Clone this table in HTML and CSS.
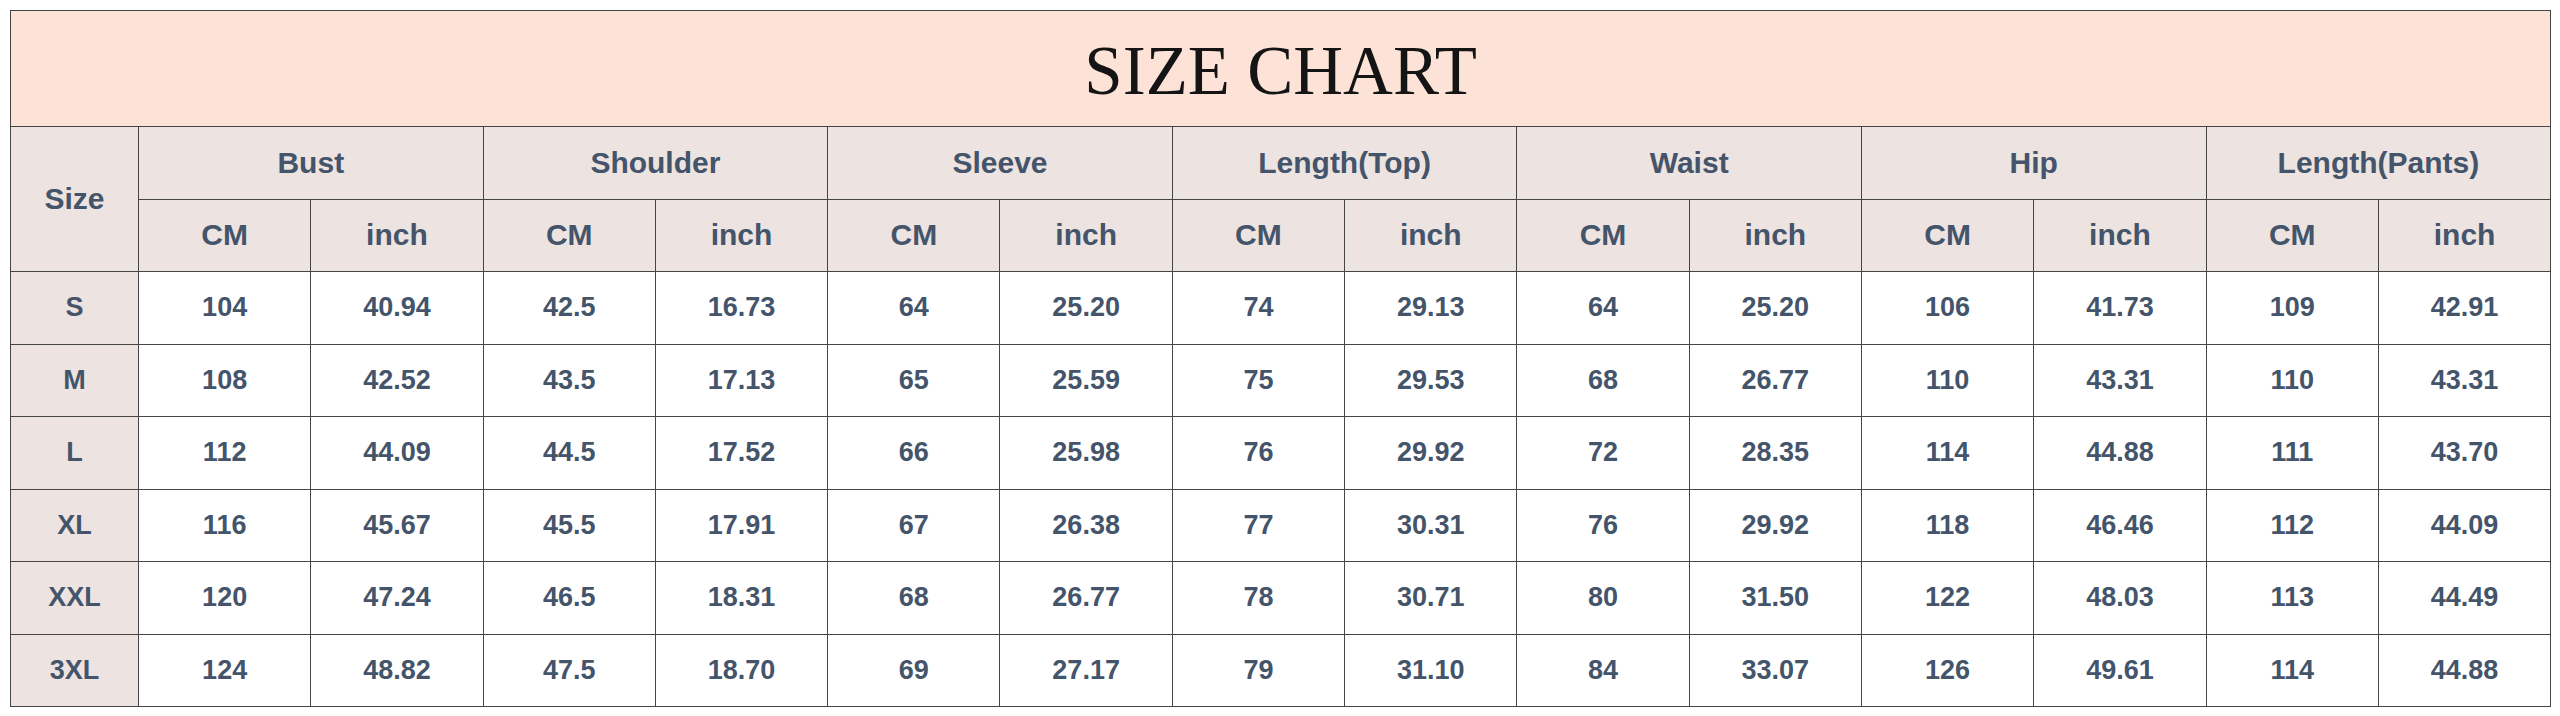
FILE: index.html
```html
<!DOCTYPE html>
<html lang="en">
<head>
<meta charset="utf-8">
<title>Size Chart</title>
<link rel="stylesheet" href="styles.css">
</head>
<body>
<div class="page">
<table class="chart">
  <colgroup>
    <col class="col-size">
    <col class="col-val"><col class="col-val">
    <col class="col-val"><col class="col-val">
    <col class="col-val"><col class="col-val">
    <col class="col-val"><col class="col-val">
    <col class="col-val"><col class="col-val">
    <col class="col-val"><col class="col-val">
    <col class="col-val"><col class="col-val">
  </colgroup>
  <thead>
    <tr class="title-row"><th colspan="15" class="title">SIZE CHART</th></tr>
    <tr class="head-row">
      <th rowspan="2" class="hd">Size</th>
      <th colspan="2" class="hd">Bust</th>
      <th colspan="2" class="hd">Shoulder</th>
      <th colspan="2" class="hd">Sleeve</th>
      <th colspan="2" class="hd">Length(Top)</th>
      <th colspan="2" class="hd">Waist</th>
      <th colspan="2" class="hd">Hip</th>
      <th colspan="2" class="hd">Length(Pants)</th>
    </tr>
    <tr class="head-row">
      <th class="hd">CM</th><th class="hd">inch</th>
      <th class="hd">CM</th><th class="hd">inch</th>
      <th class="hd">CM</th><th class="hd">inch</th>
      <th class="hd">CM</th><th class="hd">inch</th>
      <th class="hd">CM</th><th class="hd">inch</th>
      <th class="hd">CM</th><th class="hd">inch</th>
      <th class="hd">CM</th><th class="hd">inch</th>
    </tr>
  </thead>
  <tbody>
    <tr class="data-row"><th class="sz">S</th><td>104</td><td>40.94</td><td>42.5</td><td>16.73</td><td>64</td><td>25.20</td><td>74</td><td>29.13</td><td>64</td><td>25.20</td><td>106</td><td>41.73</td><td>109</td><td>42.91</td></tr>
    <tr class="data-row"><th class="sz">M</th><td>108</td><td>42.52</td><td>43.5</td><td>17.13</td><td>65</td><td>25.59</td><td>75</td><td>29.53</td><td>68</td><td>26.77</td><td>110</td><td>43.31</td><td>110</td><td>43.31</td></tr>
    <tr class="data-row"><th class="sz">L</th><td>112</td><td>44.09</td><td>44.5</td><td>17.52</td><td>66</td><td>25.98</td><td>76</td><td>29.92</td><td>72</td><td>28.35</td><td>114</td><td>44.88</td><td>111</td><td>43.70</td></tr>
    <tr class="data-row"><th class="sz">XL</th><td>116</td><td>45.67</td><td>45.5</td><td>17.91</td><td>67</td><td>26.38</td><td>77</td><td>30.31</td><td>76</td><td>29.92</td><td>118</td><td>46.46</td><td>112</td><td>44.09</td></tr>
    <tr class="data-row"><th class="sz">XXL</th><td>120</td><td>47.24</td><td>46.5</td><td>18.31</td><td>68</td><td>26.77</td><td>78</td><td>30.71</td><td>80</td><td>31.50</td><td>122</td><td>48.03</td><td>113</td><td>44.49</td></tr>
    <tr class="data-row"><th class="sz">3XL</th><td>124</td><td>48.82</td><td>47.5</td><td>18.70</td><td>69</td><td>27.17</td><td>79</td><td>31.10</td><td>84</td><td>33.07</td><td>126</td><td>49.61</td><td>114</td><td>44.88</td></tr>
  </tbody>
</table>
</div>
</body>
</html>
```

FILE: styles.css
```css
html, body {
  margin: 0;
  padding: 0;
  background: #ffffff;
}

.page {
  padding: 10px;
}

.chart {
  width: 2540px;
  table-layout: fixed;
  border-collapse: collapse;
  font-family: "Liberation Sans", Arial, sans-serif;
  color: #44546a;
}

.col-size {
  width: 128px;
}

.col-val {
  width: 172.3px;
}

.chart th,
.chart td {
  border: 1px solid #454545;
  padding: 0;
  text-align: center;
  vertical-align: middle;
  font-weight: bold;
}

.title-row {
  height: 116px;
}

.chart .title {
  background: #fde3d7;
  font-family: "Liberation Serif", "Times New Roman", serif;
  font-weight: normal;
  font-size: 69px;
  color: #141414;
  padding-top: 6px;
}

.head-row {
  height: 72.5px;
}

.chart .hd {
  background: #ede3e1;
  font-size: 30px;
}

.data-row {
  height: 72.5px;
}

.chart .sz {
  background: #ede3e1;
  font-size: 27px;
}

.data-row td {
  background: #ffffff;
  font-size: 27px;
}
```
